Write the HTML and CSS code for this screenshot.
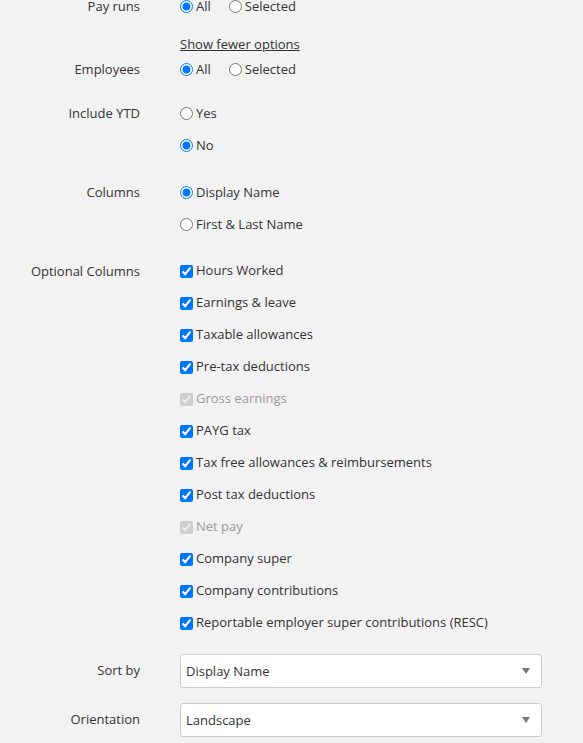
FILE: index.html
```html
<!DOCTYPE html>
<html>
<head>
<meta charset="utf-8">
<link rel="stylesheet" href="styles.css">
</head>
<body>
<form class="form">
  <div class="group g-payruns">
    <div class="label">Pay runs</div>
    <div class="controls inline">
      <label class="opt"><input type="radio" name="payruns" checked> All</label>
      <label class="opt"><input type="radio" name="payruns"> Selected</label>
    </div>
  </div>
  <div class="group g-link">
    <div class="label"></div>
    <div class="controls"><a href="#" class="link">Show fewer options</a></div>
  </div>
  <div class="group g-employees">
    <div class="label">Employees</div>
    <div class="controls inline">
      <label class="opt"><input type="radio" name="emp" checked> All</label>
      <label class="opt"><input type="radio" name="emp"> Selected</label>
    </div>
  </div>
  <div class="group g-ytd">
    <div class="label">Include YTD</div>
    <div class="controls">
      <label class="opt"><input type="radio" name="ytd"> Yes</label>
      <label class="opt"><input type="radio" name="ytd" checked> No</label>
    </div>
  </div>
  <div class="group">
    <div class="label">Columns</div>
    <div class="controls">
      <label class="opt"><input type="radio" name="cols" checked> Display Name</label>
      <label class="opt"><input type="radio" name="cols"> First &amp; Last Name</label>
    </div>
  </div>
  <div class="group">
    <div class="label">Optional Columns</div>
    <div class="controls">
      <label class="opt chk"><input type="checkbox" checked><span>Hours Worked</span></label>
      <label class="opt chk"><input type="checkbox" checked><span>Earnings &amp; leave</span></label>
      <label class="opt chk"><input type="checkbox" checked><span>Taxable allowances</span></label>
      <label class="opt chk"><input type="checkbox" checked><span>Pre-tax deductions</span></label>
      <label class="opt chk disabled"><input type="checkbox" checked disabled><span>Gross earnings</span></label>
      <label class="opt chk"><input type="checkbox" checked><span>PAYG tax</span></label>
      <label class="opt chk"><input type="checkbox" checked><span>Tax free allowances &amp; reimbursements</span></label>
      <label class="opt chk"><input type="checkbox" checked><span>Post tax deductions</span></label>
      <label class="opt chk disabled"><input type="checkbox" checked disabled><span>Net pay</span></label>
      <label class="opt chk"><input type="checkbox" checked><span>Company super</span></label>
      <label class="opt chk"><input type="checkbox" checked><span>Company contributions</span></label>
      <label class="opt chk"><input type="checkbox" checked><span>Reportable employer super contributions (RESC)</span></label>
    </div>
  </div>
  <div class="group">
    <div class="label label-select">Sort by</div>
    <div class="controls">
      <div class="select"><span>Display Name</span><svg width="8" height="6" viewBox="0 0 8 6"><path d="M0 0H8L4 6Z" fill="#777"/></svg></div>
    </div>
  </div>
  <div class="group">
    <div class="label label-select">Orientation</div>
    <div class="controls">
      <div class="select"><span>Landscape</span><svg width="8" height="6" viewBox="0 0 8 6"><path d="M0 0H8L4 6Z" fill="#777"/></svg></div>
    </div>
  </div>
</form>
</body>
</html>
```

FILE: styles.css
```css
html, body {
  margin: 0;
  padding: 0;
  background: #f2f2f2;
}
body {
  font-family: "Open Sans", "Noto Sans", sans-serif;
  font-size: 13px;
  color: #333;
  height: 743px;
  overflow: hidden;
}
.form {
  display: flex;
  flex-direction: column;
  gap: 15px;
  margin-top: -10px;
}
.group {
  display: grid;
  grid-template-columns: 140px 362px;
  column-gap: 40px;
}
.label {
  text-align: right;
  line-height: 32px;
}
.label-select {
  line-height: 33px;
}
.controls {
  display: flex;
  flex-direction: column;
}
.controls.inline {
  flex-direction: row;
  gap: 18px;
}
.opt {
  display: flex;
  align-items: center;
  height: 32px;
  white-space: nowrap;
}
.opt input {
  width: 13px;
  height: 13px;
  margin: 0 3px 0 0;
}
.opt.chk span {
  margin-bottom: 2px;
}
.opt.disabled {
  color: #999;
}
.g-link {
  margin-top: -1px;
}
.g-link .controls {
  line-height: 16px;
}
.g-link + .group {
  margin-top: -14px;
}
.g-ytd {
  margin-top: -3px;
}
.link {
  color: #333;
  text-decoration: underline;
}
.select {
  height: 34px;
  box-sizing: border-box;
  background: #fff;
  border: 1px solid #ccc;
  border-radius: 3px;
  display: flex;
  align-items: center;
  justify-content: space-between;
  padding: 0 11px 0 5px;
}
```
